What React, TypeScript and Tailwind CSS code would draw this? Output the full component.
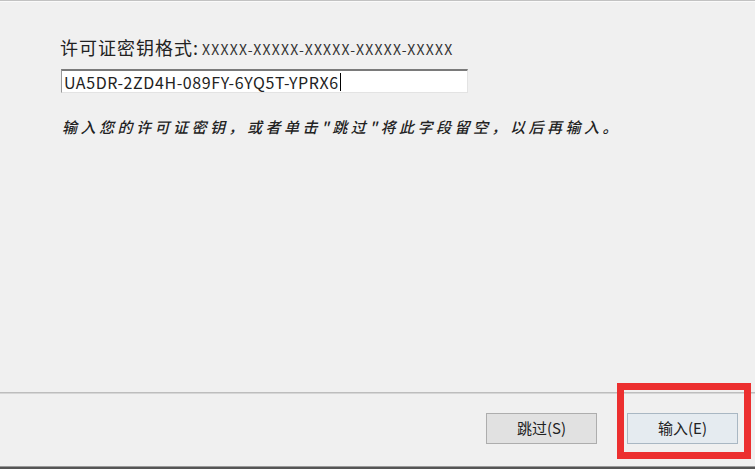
import React from "react";

const CJK = { fontFamily: '"Noto Sans CJK SC", "Noto Sans", sans-serif' };

export default function App() {
  return (
    <div
      className="relative w-[755px] h-[469px] bg-[#f0f0f0] flex flex-col overflow-hidden text-[#1a1a1a]"
      style={CJK}
    >
      <div className="h-[1px] bg-[#c2c2c2]" />
      <div className="h-[1px] bg-[#fafafa]" />
      <div className="flex-1 flex flex-col pl-[60px] pt-[32px]">
        <div className="flex items-baseline h-[26px]">
          <span className="text-[18px] tracking-[1px] text-[#222]">许可证密钥格式:</span>
          <span className="ml-[3px] text-[14px] tracking-[1.2px] text-[#333]">
            XXXXX-XXXXX-XXXXX-XXXXX-XXXXX
          </span>
        </div>
        <div className="mt-[9px] ml-[1px] w-[407px] h-[24px] bg-white border-t-2 border-t-[#7a7a7a] border-l border-l-[#9a9a9a] border-r border-r-[#e3e3e3] border-b border-b-[#e3e3e3] flex items-center pl-[2px]">
          <span className="text-[16px] tracking-[0.6px] text-[#222] leading-none">
            UA5DR-2ZD4H-089FY-6YQ5T-YPRX6
          </span>
          <span className="w-[1px] h-[18px] bg-black ml-[1px]" />
        </div>
        <div className="mt-[23px] ml-[2px] text-[15px] italic font-medium tracking-[3.5px] text-[#222]">
          输入您的许可证密钥，或者单击"跳过"将此字段留空，以后再输入。
        </div>
      </div>
      <div className="h-[1px] bg-[#bdbdbd]" />
      <div className="h-[1px] bg-[#d6d6d6]" />
      <div className="h-[72px] flex items-start justify-end pt-[19px] pr-[17px] gap-[30px]">
        <button
          className="w-[111px] h-[31px] bg-[#e1e1e1] border border-[#adadad] text-[15px] text-[#222] flex items-center justify-center"
          style={CJK}
        >
          跳过(S)
        </button>
        <button
          className="w-[111px] h-[31px] bg-[#e5ebf0] border border-[#a9b7c3] text-[15px] text-[#222] flex items-center justify-center"
          style={CJK}
        >
          输入(E)
        </button>
      </div>
      <div className="h-[1px] bg-[#9a9a9a]" />
      <div className="h-[2px] bg-[#555]" />
      <div className="absolute left-[617px] top-[383px] w-[134px] h-[76px] border-[7px] border-[#ec2f2f]" />
    </div>
  );
}
